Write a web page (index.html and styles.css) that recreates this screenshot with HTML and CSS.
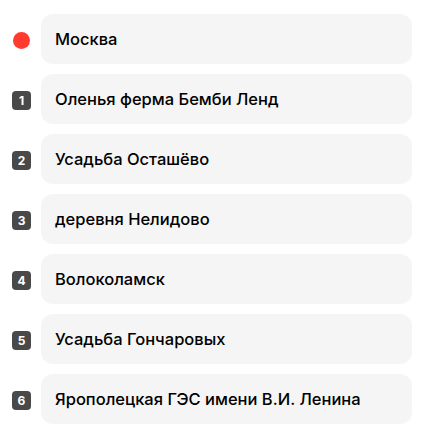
FILE: index.html
```html
<!DOCTYPE html>
<html lang="ru">
<head>
<meta charset="utf-8">
<link rel="stylesheet" href="styles.css">
</head>
<body>
<ul class="route">
  <li class="stop"><span class="marker"><span class="dot"></span></span><div class="card">Москва</div></li>
  <li class="stop"><span class="marker"><span class="badge">1</span></span><div class="card">Оленья ферма Бемби Ленд</div></li>
  <li class="stop"><span class="marker"><span class="badge">2</span></span><div class="card">Усадьба Осташёво</div></li>
  <li class="stop"><span class="marker"><span class="badge">3</span></span><div class="card">деревня Нелидово</div></li>
  <li class="stop"><span class="marker"><span class="badge">4</span></span><div class="card">Волоколамск</div></li>
  <li class="stop"><span class="marker"><span class="badge">5</span></span><div class="card">Усадьба Гончаровых</div></li>
  <li class="stop"><span class="marker"><span class="badge">6</span></span><div class="card">Ярополецкая ГЭС имени В.И. Ленина</div></li>
</ul>
</body>
</html>
```
FILE: styles.css
```css
html, body {
  margin: 0;
  padding: 0;
  background: #ffffff;
}
body {
  font-family: Inter, Roboto, "Noto Sans", sans-serif;
  color: #000000;
}
.route {
  list-style: none;
  margin: 0;
  padding: 14px 11px 0 11px;
  display: flex;
  flex-direction: column;
  gap: 10px;
}
.stop {
  display: flex;
  align-items: center;
  gap: 9px;
}
.marker {
  width: 21px;
  flex: 0 0 21px;
  display: flex;
  justify-content: center;
  align-items: center;
  padding-top: 3px;
}
.dot {
  width: 17px;
  height: 17px;
  border-radius: 50%;
  background: #ff3b30;
}
.badge {
  width: 19px;
  height: 19px;
  border-radius: 4px;
  background: #494949;
  color: #ffffff;
  font-size: 12px;
  font-weight: 700;
  line-height: 19px;
  text-align: center;
}
.card {
  flex: 1;
  height: 50px;
  box-sizing: border-box;
  padding: 0 14px;
  display: flex;
  align-items: center;
  background: #f5f5f5;
  border-radius: 12px;
  font-size: 16.5px;
  font-weight: 500;
}
```
